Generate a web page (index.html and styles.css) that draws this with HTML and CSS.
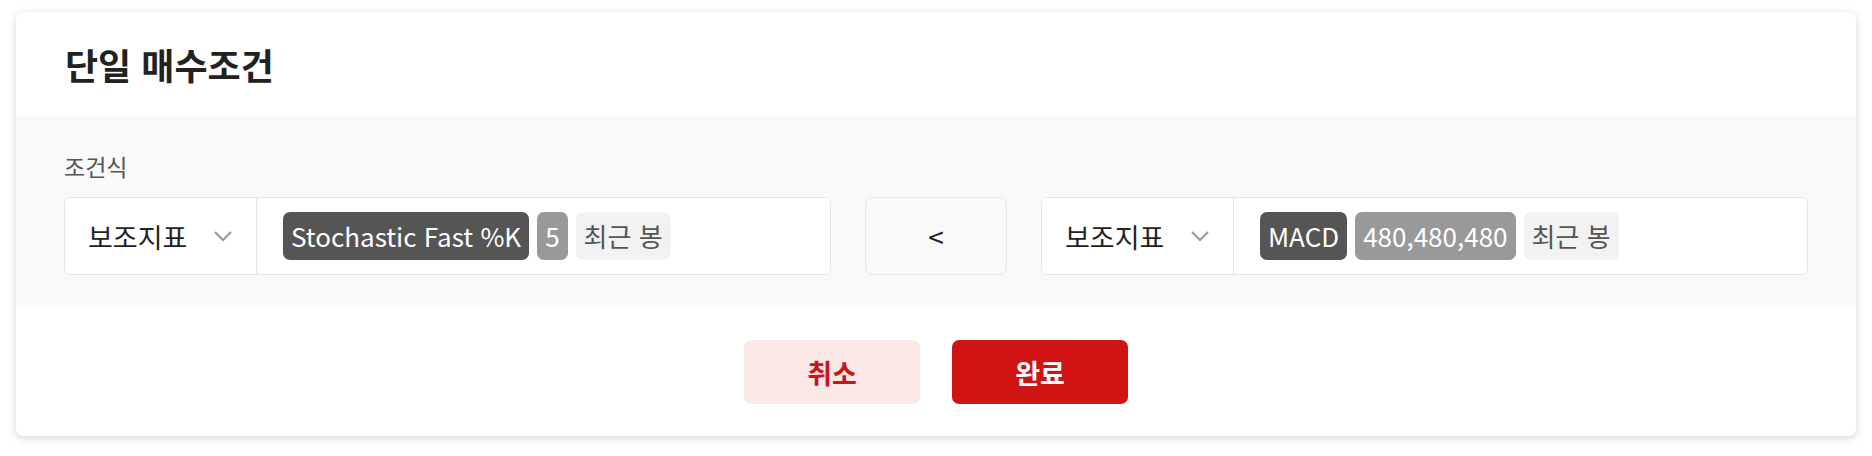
FILE: index.html
```html
<!DOCTYPE html>
<html lang="ko">
<head>
  <meta charset="UTF-8">
  <meta name="viewport" content="width=device-width, initial-scale=1.0">
  <title>단일 매수조건</title>
  <link rel="stylesheet" href="styles.css">
</head>
<body>
  <div class="modal">
    <div class="modal-header">
      <h2>단일 매수조건</h2>
    </div>

    <div class="modal-body">
      <p class="label">조건식</p>
      <div class="condition-row">
        <div class="condition">
          <div class="select">
            <span>보조지표</span>
            <svg class="chevron" width="20" height="12" viewBox="0 0 20 12">
              <polyline points="2,2 10,10 18,2" />
            </svg>
          </div>
          <div class="chips">
            <span class="chip dark">Stochastic Fast %K</span>
            <span class="chip grey">5</span>
            <span class="chip light">최근 봉</span>
          </div>
        </div>

        <div class="operator">&lt;</div>

        <div class="condition">
          <div class="select">
            <span>보조지표</span>
            <svg class="chevron" width="20" height="12" viewBox="0 0 20 12">
              <polyline points="2,2 10,10 18,2" />
            </svg>
          </div>
          <div class="chips">
            <span class="chip dark">MACD</span>
            <span class="chip grey">480,480,480</span>
            <span class="chip light">최근 봉</span>
          </div>
        </div>
      </div>
    </div>

    <div class="modal-footer">
      <button class="btn cancel">취소</button>
      <button class="btn confirm">완료</button>
    </div>
  </div>
</body>
</html>
```

FILE: styles.css
```css
body {
  margin: 0;
  padding: 12px 16px;
  font-family: "Noto Sans CJK KR", "Noto Sans", sans-serif;
  background-color: #fff;
  color: #222;
}

.modal {
  background-color: #fff;
  border-radius: 8px;
  box-shadow: 0 2px 8px rgba(0, 0, 0, 0.16);
  overflow: hidden;
}

.modal-header {
  height: 104px;
  padding: 0 49px;
  display: flex;
  align-items: center;
}

.modal-header h2 {
  margin: 0;
  font-size: 36px;
  font-weight: 700;
  color: #222;
}

.modal-body {
  background-color: #f9f9f9;
  padding: 34px 48px 32px;
}

.label {
  margin: 0 0 15px;
  font-size: 23px;
  line-height: 32px;
  color: #555;
}

.condition-row {
  display: flex;
  gap: 34px;
}

.condition {
  flex: 1;
  height: 78px;
  display: flex;
  background-color: #fff;
  border: 1px solid #e6e6e6;
  border-radius: 7px;
  box-sizing: border-box;
}

.select {
  width: 192px;
  box-sizing: border-box;
  padding: 0 23px;
  display: flex;
  align-items: center;
  justify-content: space-between;
  border-right: 1px solid #e6e6e6;
  font-size: 27px;
  color: #222;
}

.chevron polyline {
  fill: none;
  stroke: #999;
  stroke-width: 2;
}

.chips {
  display: flex;
  align-items: center;
  gap: 8px;
  padding: 0 26px;
}

.chip {
  height: 48px;
  line-height: 48px;
  padding: 0 8px;
  border-radius: 7px;
  font-size: 26px;
  white-space: nowrap;
}

.chip.dark {
  background-color: #555;
  color: #fff;
}

.chip.grey {
  background-color: #999;
  color: #fff;
}

.chip.light {
  background-color: #f2f2f2;
  color: #555;
}

.operator {
  width: 142px;
  height: 78px;
  box-sizing: border-box;
  border: 1px solid #e6e6e6;
  border-radius: 7px;
  display: flex;
  align-items: center;
  justify-content: center;
  font-size: 28px;
  color: #222;
}

.modal-footer {
  display: flex;
  justify-content: center;
  gap: 32px;
  padding: 33px 0 32px;
}

.btn {
  width: 176px;
  height: 64px;
  border: none;
  border-radius: 7px;
  font-family: inherit;
  font-size: 27px;
  font-weight: 700;
  cursor: pointer;
}

.btn.cancel {
  background-color: #fde8e8;
  color: #c8161d;
}

.btn.confirm {
  background-color: #d01414;
  color: #fff;
}
```
